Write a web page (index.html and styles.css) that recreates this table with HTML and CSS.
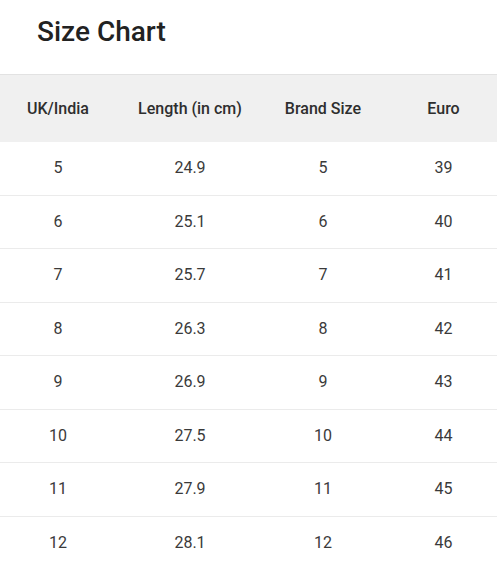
FILE: index.html
```html
<!DOCTYPE html>
<html>
<head>
<meta charset="utf-8">
<link rel="stylesheet" href="styles.css">
</head>
<body>
<div class="page">
  <h1 class="title">Size Chart</h1>
  <div class="table">
    <div class="row head">
      <div class="cell">UK/India</div>
      <div class="cell">Length (in cm)</div>
      <div class="cell">Brand Size</div>
      <div class="cell">Euro</div>
    </div>
    <div class="row"><div class="cell">5</div><div class="cell">24.9</div><div class="cell">5</div><div class="cell">39</div></div>
    <div class="row"><div class="cell">6</div><div class="cell">25.1</div><div class="cell">6</div><div class="cell">40</div></div>
    <div class="row"><div class="cell">7</div><div class="cell">25.7</div><div class="cell">7</div><div class="cell">41</div></div>
    <div class="row"><div class="cell">8</div><div class="cell">26.3</div><div class="cell">8</div><div class="cell">42</div></div>
    <div class="row"><div class="cell">9</div><div class="cell">26.9</div><div class="cell">9</div><div class="cell">43</div></div>
    <div class="row"><div class="cell">10</div><div class="cell">27.5</div><div class="cell">10</div><div class="cell">44</div></div>
    <div class="row"><div class="cell">11</div><div class="cell">27.9</div><div class="cell">11</div><div class="cell">45</div></div>
    <div class="row last"><div class="cell">12</div><div class="cell">28.1</div><div class="cell">12</div><div class="cell">46</div></div>
  </div>
</div>
</body>
</html>
```
FILE: styles.css
```css
html, body {
  margin: 0;
  padding: 0;
  background: #ffffff;
}
.page {
  width: 497px;
  font-family: Roboto, "Liberation Sans", sans-serif;
  color: #3a3a3a;
}
.title {
  margin: 0;
  height: 74px;
  box-sizing: border-box;
  padding: 14px 0 0 37px;
  font-size: 28px;
  font-weight: 500;
  line-height: 36px;
  color: #222222;
}
.table {
  display: flex;
  flex-direction: column;
}
.row {
  display: grid;
  grid-template-columns: 116px 148px 118px 115px;
  height: 53.5px;
  box-sizing: border-box;
  border-bottom: 1px solid #ebebeb;
  align-items: center;
}
.row.last {
  border-bottom: none;
}
.row.head {
  height: 68px;
  background: #f0f0f0;
  border-top: 1px solid #e2e2e2;
  border-bottom: none;
  font-weight: 500;
  color: #2e2e2e;
}
.cell {
  text-align: center;
  font-size: 16px;
  line-height: 20px;
}
.cell:last-child {
  padding-left: 8px;
}
```
